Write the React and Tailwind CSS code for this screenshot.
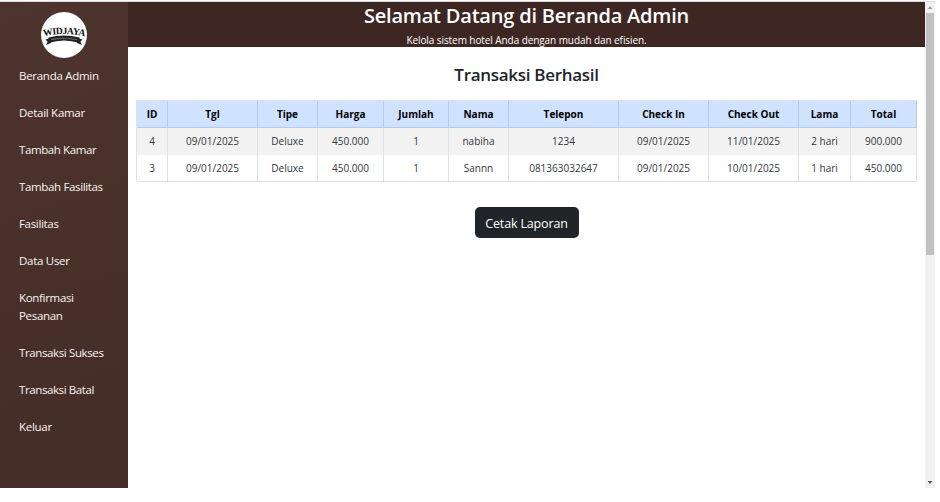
const links = [
  ['Beranda Admin', 'tracking-[-0.28px]'],
  ['Detail Kamar', 'tracking-[-0.28px]'],
  ['Tambah Kamar', 'tracking-[-0.4px]'],
  ['Tambah Fasilitas', 'tracking-[-0.35px]'],
  ['Fasilitas', 'tracking-[-0.32px]'],
  ['Data User', 'tracking-[-0.28px]'],
  ['Konfirmasi Pesanan', 'tracking-[-0.32px]'],
  ['Transaksi Sukses', 'tracking-[-0.38px]'],
  ['Transaksi Batal', 'tracking-[-0.4px]'],
  ['Keluar', 'tracking-[-0.28px]'],
];

const headers = ['ID', 'Tgl', 'Tipe', 'Harga', 'Jumlah', 'Nama', 'Telepon', 'Check In', 'Check Out', 'Lama', 'Total'];

const rows = [
  ['4', '09/01/2025', 'Deluxe', '450.000', '1', 'nabiha', '1234', '09/01/2025', '11/01/2025', '2 hari', '900.000'],
  ['3', '09/01/2025', 'Deluxe', '450.000', '1', 'Sannn', '081363032647', '09/01/2025', '10/01/2025', '1 hari', '450.000'],
];

const columns = 'grid grid-cols-[31px_90px_60px_66px_65px_60px_110px_90px_90px_52px_66px]';

function Logo() {
  return (
    <svg viewBox="0 0 46 46" className="mx-auto block h-[46px] w-[46px] overflow-visible">
      <defs>
        <path id="nameArc" d="M-1 25.4 Q23 18.6 47 25.4" />
        <path id="ribbonArc" d="M5 29.6 Q23 24.2 41 29.6" />
      </defs>
      <circle cx="23" cy="23" r="23" fill="#fff" />
      <path d="M4.5 27.4 L10 26 L10 31 L5 33 L6.6 29.8 Z M41.5 27.4 L36 26 L36 31 L41 33 L39.4 29.8 Z" fill="#222" />
      <path d="M7.5 25.4 Q23 21.4 38.5 25.4 L38.5 31 Q23 26 7.5 31 Z" fill="#222" />
      <text fontFamily="Liberation Serif, serif" fontWeight="700" fontSize="9.6" letterSpacing="-0.45" fill="#111" textAnchor="middle">
        <textPath href="#nameArc" startOffset="50%">WIDJAYA</textPath>
      </text>
      <text fontFamily="Liberation Serif, serif" fontSize="2.4" fill="#ddd" textAnchor="middle">
        <textPath href="#ribbonArc" startOffset="50%">Homestay dan Penginapan</textPath>
      </text>
    </svg>
  );
}

function Sidebar() {
  return (
    <aside className="w-[128px] shrink-0 bg-[linear-gradient(160deg,#4e342e,#442c27)] pt-[10px]">
      <Logo />
      <nav className="mt-[9px] flex flex-col gap-[19px] pr-[20px] pl-[19px]">
        {links.map(([label, tracking]) => (
          <a key={label} className={`block text-[11.5px] leading-[18px] text-[#f8f4f2] ${tracking}`}>
            {label}
          </a>
        ))}
      </nav>
    </aside>
  );
}

function Table() {
  return (
    <div className="w-[781px] border-t border-l border-[#dee2e6] text-center">
      <div className={`${columns} h-[27px] bg-[#cfe2ff] text-[10px] font-bold text-black`}>
        {headers.map((h) => (
          <div key={h} className="border-r border-b border-[#b6cbec] leading-[26px]">{h}</div>
        ))}
      </div>
      {rows.map((row, i) => (
        <div key={row[0]} className={`${columns} text-[10px] text-[#33373b] ${i === 0 ? 'h-[27px] bg-[#f2f2f2]' : 'h-[26px] bg-white'}`}>
          {row.map((cell, j) => (
            <div key={j} className={`border-r border-[#dee2e6] leading-[26px] ${i === 1 ? 'border-b' : ''}`}>{cell}</div>
          ))}
        </div>
      ))}
    </div>
  );
}

function Scrollbar() {
  return (
    <div className="flex w-[10px] shrink-0 flex-col items-center bg-[#f1f1f1]">
      <svg viewBox="0 0 10 11" className="h-[11px] w-[10px] shrink-0"><path d="M2.7 7 L5 4 L7.3 7 Z" fill="#999" /></svg>
      <div className="h-[242px] w-[8px] bg-[#c1c1c1]" />
      <svg viewBox="0 0 10 11" className="mt-auto h-[11px] w-[10px] shrink-0"><path d="M2.7 4 L7.3 4 L5 7 Z" fill="#505050" /></svg>
    </div>
  );
}

export default function App() {
  return (
    <div className="h-[502px] w-[940px] overflow-hidden bg-white pt-px font-['Open_Sans','Noto_Sans',sans-serif]">
      <div className="flex h-[487px] w-[935px] border-t border-[#d9d9d9]">
        <Sidebar />
        <main className="flex min-w-0 flex-1 flex-col">
          <header className="h-[45px] bg-[#3e2723] text-center text-white">
            <h1 className="pt-px text-[20px] leading-[26px] font-semibold tracking-[-0.2px]">Selamat Datang di Beranda Admin</h1>
            <p className="mt-[4px] text-[10px] leading-[15px] tracking-[-0.08px]">Kelola sistem hotel Anda dengan mudah dan efisien.</p>
          </header>
          <h2 className="mt-[16px] text-center text-[17px] leading-[24px] font-semibold tracking-[-0.3px] text-[#212529]">Transaksi Berhasil</h2>
          <div className="mt-[13px] pl-[8px]">
            <Table />
          </div>
          <button className="mx-auto mt-[26px] h-[31px] w-[104px] rounded-[5px] bg-[#212529] text-[12.5px] leading-[33px] tracking-[-0.15px] whitespace-nowrap text-white">
            Cetak Laporan
          </button>
        </main>
        <Scrollbar />
      </div>
    </div>
  );
}
